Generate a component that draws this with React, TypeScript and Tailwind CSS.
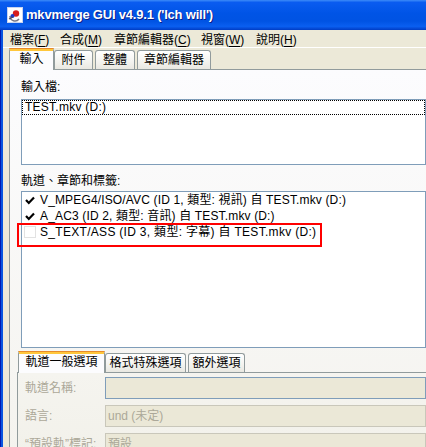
import React from "react";

const F = "font-['Liberation_Sans','Noto_Sans_CJK_TC',sans-serif]";

function Mn({ t, k }: { t: string; k: string }) {
  return (
    <span className="whitespace-nowrap">
      {t}(<span className="underline underline-offset-[2px]">{k}</span>)
    </span>
  );
}

function Check() {
  return (
    <svg width="10" height="9" viewBox="0 0 10 9" className="shrink-0">
      <polyline points="1,4 3.8,7 9,1.5" fill="none" stroke="#000" strokeWidth="2.2" />
    </svg>
  );
}

function SelTab({ label, w }: { label: string; w: string }) {
  return (
    <div
      className={`relative z-10 h-[22px] ${w} rounded-t-[3px] border-x border-[#919b9c] bg-[#fcfcfe] flex flex-col`}
    >
      <div className="h-[1px] bg-[#e68b2c] rounded-t-[3px] -mx-px" />
      <div className="h-[2px] bg-[#ffc73c]" />
      <div className="flex-1 flex items-start justify-center pt-[0px] text-[12px] leading-[16px] text-black">{label}</div>
    </div>
  );
}

function Tab({ label, w }: { label: string; w: string }) {
  return (
    <div
      className={`h-[19px] mb-px ${w} rounded-t-[3px] border border-b-0 border-[#919b9c] bg-[linear-gradient(to_bottom,#ffffff,#f3f3ef_60%,#e9e8e1)] flex items-center justify-center text-[12px] leading-[16px] text-black`}
    >
      {label}
    </div>
  );
}

export default function App() {
  return (
    <div className={`relative w-[426px] h-[447px] overflow-hidden bg-[#ece9d8] ${F}`}>
      {/* Title bar */}
      <div className="h-[30px] w-[460px] flex items-center bg-[linear-gradient(to_bottom,#3d8cf8_0%,#0a5cf0_8%,#0054e6_45%,#0053e3_70%,#0a5ff0_88%,#003cc4_100%)]">
        <div className="ml-[7px] w-[16px] h-[16px]">
          <svg width="16" height="16" viewBox="0 0 16 16">
            <rect x="0.5" y="0.5" width="15" height="15" fill="#fff" stroke="#c8d4f0" />
            <path d="M3 9 A5 5 0 0 0 12 12" fill="none" stroke="#7a7a8a" strokeWidth="1.5" />
            <circle cx="9" cy="6.5" r="3.2" fill="#d81e1e" />
            <circle cx="5.5" cy="9" r="2" fill="#1e3cc8" />
            <path d="M2 12 L6 10" stroke="#4a4a5a" strokeWidth="1.2" />
          </svg>
        </div>
        <span className="ml-[3px] text-white font-bold text-[13px] tracking-[-0.2px] font-['Liberation_Sans',sans-serif] [text-shadow:1px_1px_#0a1e8a]">
          mkvmerge GUI v4.9.1 ('Ich will')
        </span>
      </div>

      <div className="flex h-[417px]">
        {/* left window border */}
        <div className="w-[3px] shrink-0 border-l border-[#0019b0] bg-[#0855e0]" />
        <div className="w-[450px] flex flex-col">
          {/* Menu bar */}
          <div className="h-[20px] border-b border-white flex items-center text-[12px] leading-[14px] text-black pt-[3px] pl-[7px]">
            <span className="w-[50px] shrink-0"><Mn t="檔案" k="F" /></span>
            <span className="w-[54px] shrink-0"><Mn t="合成" k="M" /></span>
            <span className="w-[87px] shrink-0"><Mn t="章節編輯器" k="C" /></span>
            <span className="w-[55px] shrink-0"><Mn t="視窗" k="W" /></span>
            <span className="shrink-0"><Mn t="說明" k="H" /></span>
          </div>

          {/* Top tab strip */}
          <div className="h-[22px] -mb-px flex items-end pl-[6px]">
            <SelTab label="輸入" w="w-[45px]" />
            <Tab label="附件" w="w-[39px]" />
            <div className="w-[2px]" />
            <Tab label="整體" w="w-[40px]" />
            <div className="w-[2px]" />
            <Tab label="章節編輯器" w="w-[74px]" />
          </div>

          {/* Top panel */}
          <div className="ml-[6px] flex-1 border-t border-l border-[#919b9c] bg-[linear-gradient(to_bottom,#fcfcfe,#f4f3ee)] pl-[11px] flex flex-col text-[12px] text-black">
            <div className="mt-[10px] h-[14px] leading-[14px]">輸入檔:</div>
            <div className="mt-[5px] h-[66px] border border-[#7f9db9] bg-white">
              <div className="h-[15px] border border-dotted border-black pl-[2px] leading-[13px] tracking-[0.25px]">TEST.mkv (D:)</div>
            </div>
            <div className="mt-[9px] h-[14px] leading-[14px]">軌道、章節和標籤:</div>
            <div className="mt-[3px] h-[157px] border border-[#7f9db9] bg-white tracking-[0.15px]">
              <div className="h-[16px] flex items-center pl-[3px] gap-[5px] leading-[16px]">
                <Check />
                <span className="whitespace-nowrap">V_MPEG4/ISO/AVC (ID 1, 類型: 視訊) 自 TEST.mkv (D:)</span>
              </div>
              <div className="h-[16px] flex items-center pl-[3px] gap-[5px] leading-[16px]">
                <Check />
                <span className="whitespace-nowrap">A_AC3 (ID 2, 類型: 音訊) 自 TEST.mkv (D:)</span>
              </div>
              <div className="h-[16px] flex items-center pl-[2px] gap-[4px] leading-[16px]">
                <div className="w-[12px] h-[12px] border border-[#e2e2e2] bg-white shrink-0" />
                <span className="whitespace-nowrap tracking-[0.3px]">S_TEXT/ASS (ID 3, 類型: 字幕) 自 TEST.mkv (D:)</span>
              </div>
            </div>

            {/* Bottom section */}
            <div className="mt-[3px] -ml-[4px] flex flex-col flex-1">
              <div className="h-[22px] -mb-px flex items-end pl-[1px]">
                <SelTab label="軌道一般選項" w="w-[87px]" />
                <Tab label="格式特殊選項" w="w-[81px]" />
                <div className="w-[2px]" />
                <Tab label="額外選項" w="w-[57px]" />
              </div>
              <div className="flex-1 border-t border-l border-[#919b9c] bg-[linear-gradient(to_bottom,#f5f4ef,#f2f1ea)] pt-[4px] pl-[7px] flex flex-col gap-[6px]">
                <div className="flex items-center h-[22px]">
                  <div className="w-[80px] text-[#aca899]">軌道名稱:</div>
                  <div className="flex-1 h-[22px] border border-[#7f9db9] bg-[#ebe8d7]" />
                </div>
                <div className="flex items-center h-[22px]">
                  <div className="w-[80px] text-[#aca899]">語言:</div>
                  <div className="flex-1 h-[22px] border border-[#c9c7ba] bg-[#ebe8d7] pl-[2px] text-[#aca899] leading-[20px]">und (未定)</div>
                </div>
                <div className="flex items-center h-[22px]">
                  <div className="w-[80px] text-[#aca899] whitespace-nowrap">“預設軌”標記:</div>
                  <div className="flex-1 h-[22px] border border-[#c9c7ba] bg-[#ebe8d7] pl-[2px] text-[#aca899] leading-[20px]">預設</div>
                </div>
              </div>
            </div>
          </div>
        </div>
      </div>

      {/* Red annotation box */}
      <div className="absolute left-[17px] top-[223px] w-[305px] h-[24px] border-2 border-[#ff0000]" />
    </div>
  );
}
